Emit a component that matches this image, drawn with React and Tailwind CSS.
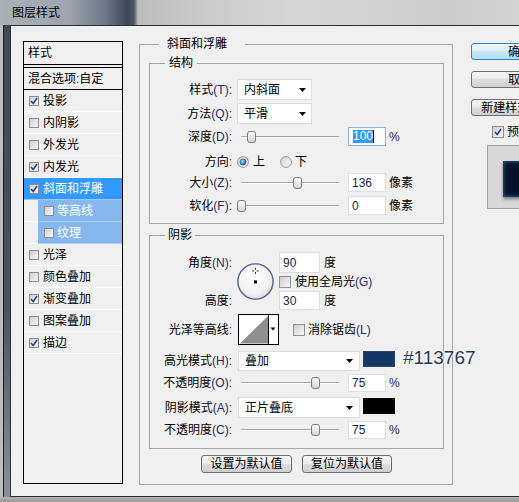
import React from 'react';

function L({ zh, en }) {
  return (
    <span className="whitespace-nowrap">
      {zh}
      {en && <span className="text-[#1f2a66]">{en}</span>}
    </span>
  );
}

function Check({ on, big }) {
  return (
    <span
      className={
        (big ? 'w-[12px] h-[12px]' : 'w-[10px] h-[10px]') +
        ' shrink-0 flex items-center justify-center border border-[#8f8f8f] bg-[linear-gradient(135deg,#cfcfcf,#f8f8f8)]'
      }
    >
      {on && (
        <svg width="8" height="8" viewBox="0 0 8 8">
          <path d="M1 4 L3.2 6.5 L7 1" stroke="#2a3c92" strokeWidth="1.5" fill="none" />
        </svg>
      )}
    </span>
  );
}

function Radio({ on }) {
  return (
    <svg width="12" height="12" viewBox="0 0 12 12" className="shrink-0">
      <defs>
        <radialGradient id="rgOn" cx="0.4" cy="0.35" r="0.7">
          <stop offset="0" stopColor="#9fdcff" />
          <stop offset="1" stopColor="#0b5ea8" />
        </radialGradient>
        <linearGradient id="rgBg" x1="0" y1="0" x2="1" y2="1">
          <stop offset="0" stopColor="#d4d4d4" />
          <stop offset="1" stopColor="#fbfbfb" />
        </linearGradient>
      </defs>
      <circle cx="6" cy="6" r="5.4" fill="url(#rgBg)" stroke="#8b8b8b" strokeWidth="0.9" />
      {on && <circle cx="6" cy="6" r="3.1" fill="url(#rgOn)" stroke="#1b4a80" strokeWidth="0.6" />}
    </svg>
  );
}

function Arrow() {
  return (
    <svg width="7" height="4" viewBox="0 0 7 4" className="shrink-0">
      <path d="M0 0 H7 L3.5 4 Z" fill="#000" />
    </svg>
  );
}

function Slider({ pos }) {
  return (
    <div className="relative ml-[9px] w-[98px] h-[12px] shrink-0">
      <div className="absolute left-0 right-0 top-[5px] h-[2px] bg-[#a7a7a7] border-b border-white" />
      <div
        className="absolute top-0 w-[9px] h-[12px] rounded-[3px] border border-[#7c7c7c] bg-[linear-gradient(#ffffff,#d3d3d3)]"
        style={{ left: pos - 4.5 }}
      />
    </div>
  );
}

function Box({ w, h, className = '', children }) {
  return (
    <div
      className={`${w} ${h} ${className} shrink-0 flex items-center pl-[3px] bg-white border border-[#dedede] text-[#1b2150]`}
    >
      {children}
    </div>
  );
}

const listRows = [
  { t: '投影', c: true },
  { t: '内阴影' },
  { t: '外发光' },
  { t: '内发光', c: true },
  { t: '斜面和浮雕', c: true, sel: true },
  { t: '等高线', sub: true },
  { t: '纹理', sub: true },
  { t: '光泽' },
  { t: '颜色叠加' },
  { t: '渐变叠加', c: true },
  { t: '图案叠加' },
  { t: '描边', c: true },
];

function StyleList() {
  return (
    <div className="mt-[5px] w-[100px] h-[443px] shrink-0 border border-black flex flex-col">
      <div className="h-[23px] border-b border-black flex items-center pl-[4px]">样式</div>
      <div className="h-[2px]" />
      <div className="h-[23px] border-y border-black flex items-center pl-[4px]">
        <L zh="混合选项" en=":" />
        自定
      </div>
      {listRows.map((r) =>
        r.sub ? (
          <div key={r.t} className="h-[22px] flex">
            <div className="w-[14px] border-b border-white" />
            <div className="flex-1 flex items-center pl-[6px] gap-[3px] bg-[#86b8ef] border-b border-[#a9cff7] text-white">
              <Check on={r.c} />
              <span>{r.t}</span>
            </div>
          </div>
        ) : (
          <div
            key={r.t}
            className={
              'h-[22px] flex items-center pl-[5px] gap-[4px] border-b ' +
              (r.sel ? 'bg-[#3399ff] text-white border-[#9cc8f6]' : 'border-white')
            }
          >
            <Check on={r.c} />
            <span>{r.t}</span>
          </div>
        )
      )}
    </div>
  );
}

function Row({ className = '', children }) {
  return <div className={`flex items-center ${className}`}>{children}</div>;
}

function Label({ zh, en, h = 'h-[21px]' }) {
  return (
    <div className={`w-[82px] ${h} shrink-0 flex items-center justify-end`}>
      <L zh={zh} en={en} />
    </div>
  );
}

function Select({ w, h, value, pr = 'pr-[5px]', className = '' }) {
  return (
    <div
      className={`${w} ${h} ${pr} ${className} shrink-0 flex items-center justify-between pl-[6px] bg-white border border-[#dcdcdc]`}
    >
      <span>{value}</span>
      <Arrow />
    </div>
  );
}

function Dial() {
  return (
    <svg width="37" height="37" viewBox="0 0 37 37">
      <defs>
        <radialGradient id="dialBg" cx="0.45" cy="0.4" r="0.62">
          <stop offset="0" stopColor="#ffffff" />
          <stop offset="0.75" stopColor="#f1f1f1" />
          <stop offset="1" stopColor="#d6d6d6" />
        </radialGradient>
      </defs>
      <circle cx="18.5" cy="18.5" r="17.6" fill="url(#dialBg)" stroke="#56648a" strokeWidth="1.4" />
      <path d="M18.5 4.8 V6.8 M18.5 9 V11 M15.3 8 H17.3 M19.7 8 H21.7" stroke="#222" strokeWidth="0.9" />
      <rect x="17" y="17.4" width="3" height="3" fill="#000" />
    </svg>
  );
}

function Contour() {
  return (
    <svg width="41" height="31" viewBox="0 0 41 31" className="shrink-0">
      <rect x="0.5" y="0.5" width="40" height="30" fill="#fff" stroke="#000" />
      <path d="M2 29.5 L30 2 L30 29.5 Z" fill="#8f8f8f" />
      <line x1="30.5" y1="0" x2="30.5" y2="31" stroke="#000" />
      <path d="M32.5 13.5 L37.5 13.5 L35 16.5 Z" fill="#000" />
    </svg>
  );
}

function WinButton({ children, def, className = '' }) {
  return (
    <div
      className={
        `${className} shrink-0 flex items-center justify-center rounded-[3px] border whitespace-nowrap ` +
        (def
          ? 'border-[#3c7fb1] bg-[linear-gradient(#eef7fd_0%,#dcf0fb_50%,#c5e6f8_50%,#b4dcf3_100%)]'
          : 'border-[#707070] bg-[linear-gradient(#f4f4f4_0%,#ececec_50%,#dedede_50%,#d0d0d0_100%)]')
      }
    >
      {children}
    </div>
  );
}

function Structure() {
  return (
    <fieldset className="mt-[3px] h-[169px] min-w-0 border border-[#a6a6a6]">
      <legend className="ml-[15px] px-[4px] leading-[16px]">结构</legend>
      <div className="pt-[8px] flex flex-col">
        <Row className="h-[21px]">
          <Label zh="样式" en="(T):" />
          <Select w="w-[75px]" h="h-[21px]" value="内斜面" className="ml-[5px]" />
        </Row>
        <Row className="h-[21px] mt-[3px]">
          <Label zh="方法" en="(Q):" />
          <Select w="w-[75px]" h="h-[21px]" value="平滑" className="ml-[5px]" />
        </Row>
        <Row className="h-[21px] mt-[2px]">
          <Label zh="深度" en="(D):" />
          <Slider pos={10} />
          <div className="ml-[9px] w-[38px] h-[19px] shrink-0 flex items-center pl-[4px] bg-white border border-[#8fb3dc]">
            <span className="bg-[#3399ff] text-white leading-[13px]">100</span>
            <span className="w-[1px] h-[13px] bg-black" />
          </div>
          <span className="ml-[3px] text-[#1f2a66]">%</span>
        </Row>
        <Row className="h-[22px] mt-[4px]">
          <Label zh="方向" en=":" h="h-[22px]" />
          <div className="ml-[5px] flex items-center">
            <Radio on />
            <span className="ml-[4px]">上</span>
            <span className="ml-[15px] flex">
              <Radio />
            </span>
            <span className="ml-[3px]">下</span>
          </div>
        </Row>
        <Row className="h-[19px]">
          <Label zh="大小" en="(Z):" h="h-[19px]" />
          <Slider pos={56} />
          <Box w="w-[38px]" h="h-[19px]" className="ml-[9px]">136</Box>
          <span className="ml-[3px]">像素</span>
        </Row>
        <Row className="h-[19px] mt-[4px]">
          <Label zh="软化" en="(F):" h="h-[19px]" />
          <Slider pos={0} />
          <Box w="w-[38px]" h="h-[19px]" className="ml-[9px]">0</Box>
          <span className="ml-[3px]">像素</span>
        </Row>
      </div>
    </fieldset>
  );
}

function Shadow() {
  return (
    <fieldset className="mt-[3px] h-[222px] min-w-0 border border-[#a6a6a6]">
      <legend className="ml-[15px] px-[3px] leading-[16px]">阴影</legend>
      <div className="pt-[9px] flex flex-col">
        <div className="flex h-[58px]">
          <div className="w-[82px] shrink-0 flex flex-col justify-between items-end">
            <div className="h-[21px] flex items-center">
              <L zh="角度" en="(N):" />
            </div>
            <div className="h-[19px] flex items-center">
              <L zh="高度" en=":" />
            </div>
          </div>
          <div className="ml-[5px] mt-[11px] flex">
            <Dial />
          </div>
          <div className="ml-[5px] flex flex-col">
            <Row className="h-[21px]">
              <Box w="w-[41px]" h="h-[21px]">90</Box>
              <span className="ml-[4px]">度</span>
            </Row>
            <Row className="h-[12px] mt-[3px]">
              <Check big />
              <span className="ml-[4px] whitespace-nowrap">
                使用全局光<span className="text-[#1f2a66]">(G)</span>
              </span>
            </Row>
            <Row className="h-[19px] mt-[3px]">
              <Box w="w-[41px]" h="h-[19px]">30</Box>
              <span className="ml-[4px]">度</span>
            </Row>
          </div>
        </div>
        <Row className="h-[31px] mt-[4px]">
          <Label zh="光泽等高线" en=":" h="h-[31px]" />
          <div className="ml-[6px] flex">
            <Contour />
          </div>
          <div className="ml-[14px] flex items-center">
            <Check big />
            <span className="ml-[3px] whitespace-nowrap">
              消除锯齿<span className="text-[#1f2a66]">(L)</span>
            </span>
          </div>
        </Row>
        <div className="flex items-start h-[20px] mt-[6px]">
          <Label zh="高光模式" en="(H):" h="h-[20px]" />
          <Select w="w-[122px]" h="h-[20px]" value="叠加" pr="pr-[6px]" className="ml-[6px]" />
          <div className="ml-[3px] w-[32px] h-[16px] shrink-0 bg-[#143766] border border-[#2a4670]" />
          <div className="ml-[8px] w-0 flex">
            <span className="-mt-[1px] text-[19px] leading-[16px] text-[#1f3b63] whitespace-nowrap [font-family:'Liberation_Sans',sans-serif] [text-shadow:0_0_2px_#fff,0_0_2px_#fff,0_0_3px_#fff]">
              #113767
            </span>
          </div>
        </div>
        <Row className="h-[18px] mt-[3px]">
          <Label zh="不透明度" en="(O):" h="h-[18px]" />
          <Slider pos={74.5} />
          <Box w="w-[38px]" h="h-[18px]" className="ml-[9px]">75</Box>
          <span className="ml-[3px] text-[#1f2a66]">%</span>
        </Row>
        <div className="flex items-start h-[21px] mt-[5px]">
          <Label zh="阴影模式" en="(A):" h="h-[21px]" />
          <Select w="w-[122px]" h="h-[21px]" value="正片叠底" pr="pr-[6px]" className="ml-[6px]" />
          <div className="ml-[3px] mt-[1px] w-[32px] h-[16px] shrink-0 bg-black" />
        </div>
        <Row className="h-[18px] mt-[3px]">
          <Label zh="不透明度" en="(C):" h="h-[18px]" />
          <Slider pos={74.5} />
          <Box w="w-[38px]" h="h-[18px]" className="ml-[9px]">75</Box>
          <span className="ml-[3px] text-[#1f2a66]">%</span>
        </Row>
      </div>
    </fieldset>
  );
}

export default function App() {
  return (
    <div className="w-[519px] h-[502px] overflow-hidden bg-[#a3a3a3] text-[12px] leading-[16px] text-black [font-family:'Liberation_Sans','Noto_Sans_CJK_SC',sans-serif]">
      <div className="h-[25px] flex items-center pl-[12px] bg-[linear-gradient(to_right,#aab1b9_0px,#9ca4ad_70px,#6e7886_104px,#3f4959_127px,#4b5563_134px,#bdbdbd_138px,#c9c9c9_200px,#d7d7d7_300px,#cbcbcb_450px,#d2d2d2_519px)]">
        图层样式
      </div>
      <div className="flex h-[472px]">
        <div className="w-[10px] shrink-0 flex">
          <div className="w-[3px] bg-[#b9bcc0]" />
          <div className="w-[1px] bg-[#1c1f24]" />
          <div className="flex-1 bg-[linear-gradient(#3e4858,#4a5363_60%,#8c9096_100%)]" />
        </div>
        <div className="flex-1 min-w-0 overflow-hidden bg-[#f0f0f0] border-t border-l border-b border-[#2b2e33] flex items-start pl-[12px] pt-[10px]">
          <StyleList />
          <fieldset className="ml-[16px] w-[314px] min-w-0 h-[449px] shrink-0 border border-[#a6a6a6] pr-[8px] pl-[9px]">
            <legend className="ml-[10px] pl-[8px] pr-[18px] leading-[16px]">斜面和浮雕</legend>
            <div className="flex flex-col">
              <Structure />
              <Shadow />
              <div className="mt-[6px] flex justify-center gap-[10px]">
                <WinButton className="w-[91px] h-[18px]">设置为默认值</WinButton>
                <WinButton className="w-[90px] h-[18px]">复位为默认值</WinButton>
              </div>
            </div>
          </fieldset>
          <div className="ml-[18px] mt-[7px] shrink-0 flex flex-col">
            <WinButton def className="w-[98px] h-[17px]">确定</WinButton>
            <WinButton className="w-[98px] h-[17px] mt-[11px]">取消</WinButton>
            <WinButton className="w-[98px] h-[17px] mt-[11px]">
              新建样式<span className="text-[#1f2a66]">(W)...</span>
            </WinButton>
            <div className="mt-[10px] ml-[21px] h-[12px] flex items-center">
              <Check on big />
              <span className="ml-[3px] whitespace-nowrap">
                预览<span className="text-[#1f2a66]">(V)</span>
              </span>
            </div>
            <div className="mt-[7px] ml-[16px] w-[68px] h-[64px] pt-[4px] flex items-center justify-center bg-[#d8d8d8] border border-[#a3a3a3]">
              <div className="w-[36px] h-[36px] bg-[#06132a] shadow-[inset_0_0_4px_#2d74bd,0_2px_3px_rgba(0,0,0,0.45)]" />
            </div>
          </div>
        </div>
      </div>
      <div className="h-[5px] bg-[linear-gradient(#b4b4b4,#9a9a9a)]" />
    </div>
  );
}
